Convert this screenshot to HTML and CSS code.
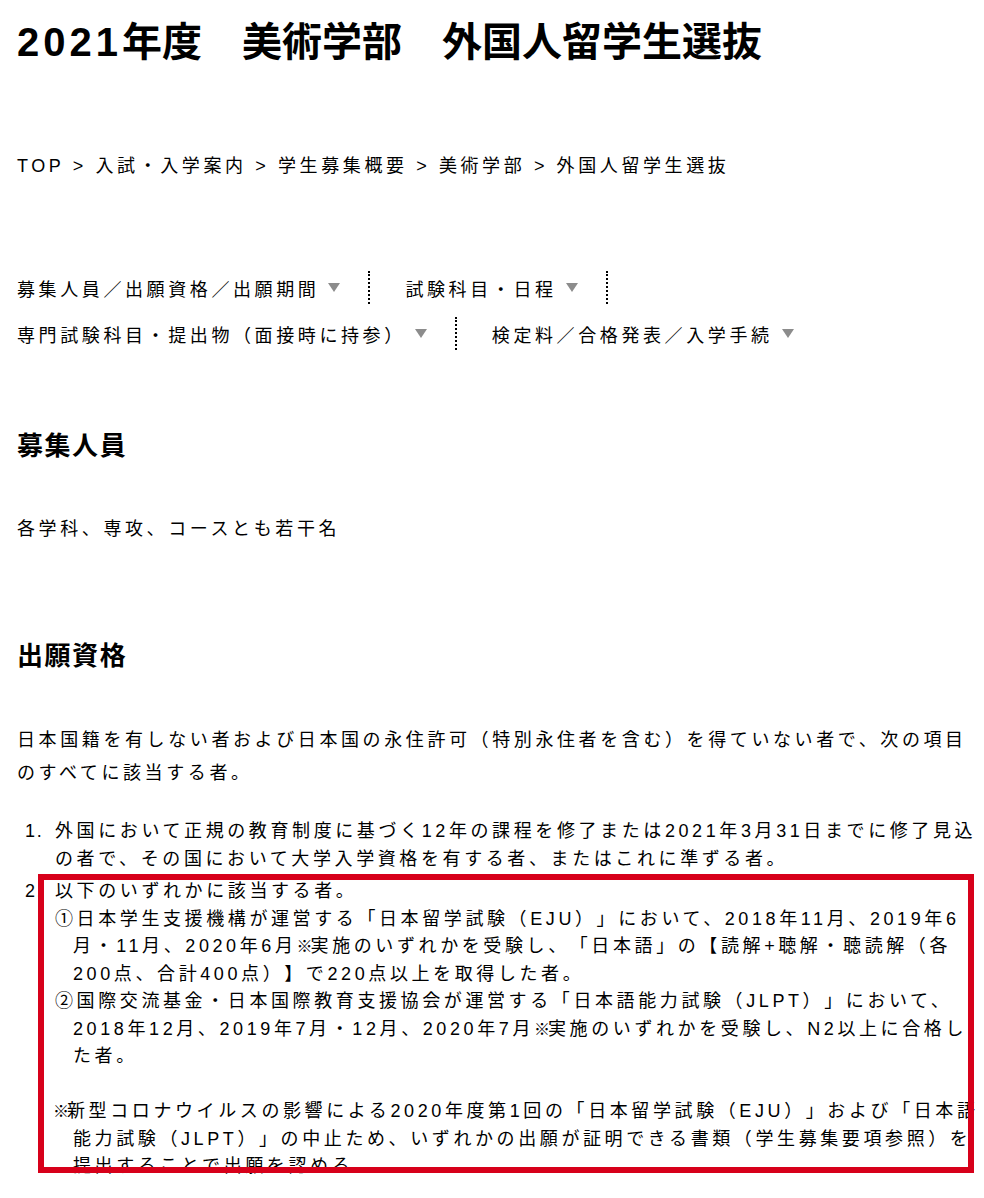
FILE: index.html
```html
<!DOCTYPE html>
<html lang="ja">
<head>
<meta charset="utf-8">
<title>2021年度 美術学部 外国人留学生選抜</title>
<link rel="stylesheet" href="styles.css">
</head>
<body>
<div class="page">
  <h1 class="title"><span class="num">2021</span>年度　美術学部　外国人留学生選抜</h1>

  <p class="crumbs">TOP &gt; 入試・入学案内 &gt; 学生募集概要 &gt; 美術学部 &gt; 外国人留学生選抜</p>

  <ul class="tabs">
    <li class="tab">募集人員／出願資格／出願期間<span class="tri"></span></li>
    <li class="tab">試験科目・日程<span class="tri"></span></li>
    <li class="tab">専門試験科目・提出物（面接時に持参）<span class="tri"></span></li>
    <li class="tab">検定料／合格発表／入学手続<span class="tri"></span></li>
  </ul>

  <h2 class="heading heading-first">募集人員</h2>
  <p class="text text-first">各学科、専攻、コースとも若干名</p>

  <h2 class="heading heading-second">出願資格</h2>
  <p class="text text-second">日本国籍を有しない者および日本国の永住許可（特別永住者を含む）を得ていない者で、次の項目のすべてに該当する者。</p>

  <ol class="reqs">
    <li class="req">
      <span class="req-num">1.</span>
      <div class="req-body">外国において正規の教育制度に基づく12年の課程を修了または2021年3月31日までに修了見込の者で、その国において大学入学資格を有する者、またはこれに準ずる者。</div>
    </li>
    <li class="req req-marked">
      <span class="req-num">2.</span>
      <div class="req-body">
        <div>以下のいずれかに該当する者。</div>
        <div class="hang">①日本学生支援機構が運営する「日本留学試験（EJU）」において、2018年11月、2019年6月・11月、2020年6月<span class="kome">※</span>実施のいずれかを受験し、「日本語」の【読解+聴解・聴読解（各200点、合計400点）】で220点以上を取得した者。</div>
        <div class="hang">②国際交流基金・日本国際教育支援協会が運営する「日本語能力試験（JLPT）」において、2018年12月、2019年7月・12月、2020年7月<span class="kome">※</span>実施のいずれかを受験し、N2以上に合格した者。</div>
        <div class="note"><span class="kome">※</span>新型コロナウイルスの影響による2020年度第1回の「日本留学試験（EJU）」および「日本語能力試験（JLPT）」の中止ため、いずれかの出願が証明できる書類（学生募集要項参照）を提出することで出願を認める。</div>
      </div>
      <div class="marker-box"></div>
    </li>
  </ol>
</div>
</body>
</html>
```

FILE: styles.css
```css
* {
  box-sizing: border-box;
}

html, body {
  margin: 0;
  padding: 0;
  background: #ffffff;
}

body {
  color: #000000;
  font-family: "Liberation Sans", "Noto Sans CJK JP", sans-serif;
  font-weight: 400;
  text-spacing-trim: space-all;
}

.page {
  padding: 18px 4px 40px 17px;
}

.title {
  margin: 0;
  font-size: 40px;
  line-height: 48px;
  font-weight: 700;
  letter-spacing: 0;
}

.title .num {
  letter-spacing: 0.1em;
}

.crumbs {
  margin: 87px 0 0;
  font-size: 18px;
  line-height: 27px;
  letter-spacing: 0.2em;
}

.tabs {
  list-style: none;
  margin: 91px 0 0;
  padding: 0;
  display: flex;
  flex-wrap: wrap;
  row-gap: 13px;
}

.tab {
  display: flex;
  align-items: center;
  height: 33px;
  font-size: 18px;
  letter-spacing: 0.2em;
  padding-right: 28px;
  margin-right: 35px;
  border-right: 2px dotted #000000;
}

.tab:last-child {
  border-right: 0;
}

.tri {
  display: block;
  width: 0;
  height: 0;
  margin-left: 9px;
  border-left: 6px solid transparent;
  border-right: 6px solid transparent;
  border-top: 9px solid #8c8c8c;
}

.heading {
  margin: 0;
  font-size: 26px;
  line-height: 36px;
  font-weight: 700;
  letter-spacing: 0.06em;
}

.heading-first {
  margin-top: 78px;
}

.heading-second {
  margin-top: 93px;
}

.text {
  margin: 0;
  font-size: 18px;
  line-height: 32.4px;
  letter-spacing: 0.2em;
}

.text-first {
  margin-top: 49px;
}

.text-second {
  margin-top: 50px;
}

.reqs {
  list-style: none;
  margin: 29px 0 0;
  padding: 0;
  font-size: 18px;
  line-height: 27.5px;
  letter-spacing: 0.2em;
}

.req {
  position: relative;
  display: grid;
  grid-template-columns: 38px 1fr;
}

.req + .req {
  margin-top: 5px;
}

.req-num {
  padding-left: 8px;
  letter-spacing: 0.1em;
}

.hang {
  padding-left: 18px;
  text-indent: -18px;
}

.note {
  margin-top: 27.5px;
  padding-left: 18px;
  text-indent: -20px;
}

.kome {
  font-family: "Noto Sans CJK JP", sans-serif;
  font-size: 16px;
  line-height: 1;
  letter-spacing: -2px;
}

.marker-box {
  position: absolute;
  left: 21px;
  top: -4px;
  width: 936px;
  height: 299px;
  border: 6px solid #d7001a;
  pointer-events: none;
}
```
